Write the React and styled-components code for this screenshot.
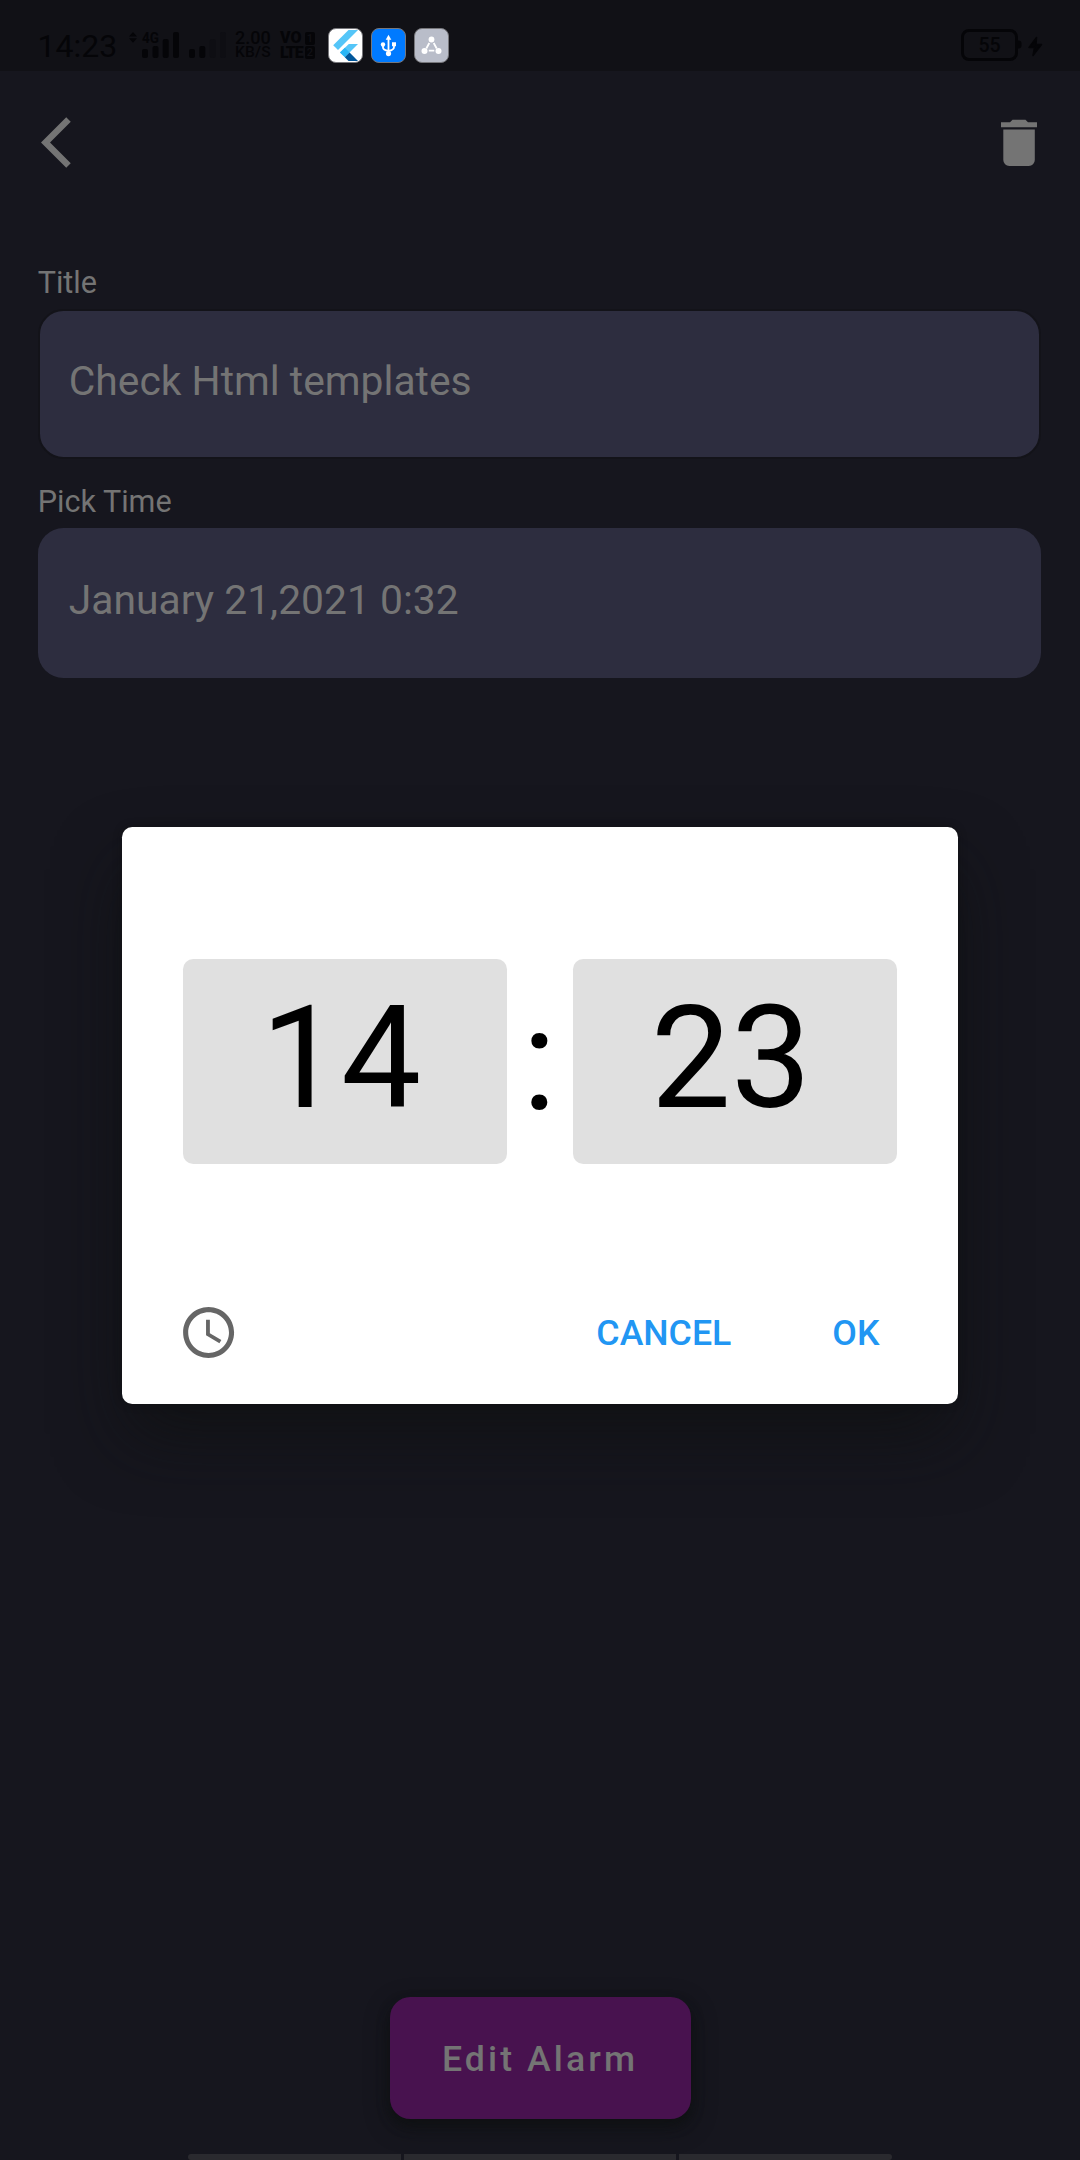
import React from "react";
import styled, { createGlobalStyle } from "styled-components";

const ink = "#050508";

const GlobalStyle = createGlobalStyle`
  * { box-sizing: border-box; }
  html, body { margin: 0; padding: 0; background: #16161e; }
  body { font-family: Roboto, "Liberation Sans", sans-serif; }
  button { font-family: inherit; border: 0; padding: 0; background: none; }
  svg { display: block; }
`;

const Screen = styled.div`
  position: relative;
  display: flex;
  flex-direction: column;
  width: 1080px;
  height: 2160px;
  overflow: hidden;
  background: #16161e;
`;

/* Status bar */
const StatusBar = styled.header`
  display: flex;
  justify-content: space-between;
  height: 71px;
  padding: 28px 36px 0 37.5px;
  background: #111116;
  color: ${ink};
`;
const StatusGroup = styled.div`
  display: flex;
  align-items: flex-start;
`;
const Clock = styled.span`
  width: 91.5px;
  font-size: 32px;
  line-height: 36px;
`;
const Signal = styled.svg`
  width: 100px;
  height: 36px;
  margin-right: 6px;
  fill: ${ink};
  font-weight: 700;
`;
const Stack = styled.div`
  display: flex;
  flex-direction: column;
  padding-top: 3px;
  width: ${(p) => p.$width}px;
`;
const StackLine = styled.span`
  display: flex;
  justify-content: space-between;
  height: ${(p) => p.$height}px;
  width: ${(p) => p.$width}px;
  font-size: ${(p) => p.$size}px;
  font-weight: ${(p) => p.$weight};
  line-height: ${(p) => p.$height}px;
  letter-spacing: ${(p) => p.$spacing || 0}px;
  white-space: nowrap;
`;
const SimBadge = styled.span`
  width: 10px;
  height: 13px;
  margin-top: 1px;
  border-radius: 2px;
  background: ${ink};
  color: #111116;
  font-size: 11px;
  font-weight: 500;
  line-height: 13px;
  letter-spacing: 0;
  text-align: center;
`;
const Notices = styled.div`
  display: flex;
  gap: 8px;
  margin-left: 12px;
`;
const NoticeIcon = styled.svg`
  width: 35px;
  height: 35px;
  border-radius: 8px;
  border: 1px solid #77777b;
  background: ${(p) => p.$color};
`;
const Battery = styled.div`
  width: 57px;
  height: 32px;
  margin-top: 1px;
  border: 3px solid ${ink};
  border-radius: 8px;
  font-size: 19.5px;
  font-weight: 500;
  line-height: 28px;
  text-align: center;
`;
const BatteryTail = styled.svg`
  width: 26px;
  height: 35px;
  fill: ${ink};
`;

/* Page */
const Toolbar = styled.nav`
  display: flex;
  justify-content: space-between;
  height: 193.6px;
  padding: 40.7px 43px 0 40.8px;
`;
const ToolIcon = styled.svg`
  width: ${(p) => p.$width}px;
  height: 61.2px;
  fill: #747474;
`;
const Form = styled.main`
  display: flex;
  flex-direction: column;
  flex: 1;
  padding: 0 39px 0 38.25px;
  color: #747474;
`;
const Label = styled.label`
  height: ${(p) => p.$height}px;
  margin-left: -0.6px;
  font-size: 30.6px;
  line-height: 36px;
`;
const Field = styled.div`
  height: 150px;
  margin-bottom: ${(p) => p.$gap || 0}px;
  padding: ${(p) => p.$top}px 28.5px 0;
  border: ${(p) => (p.$outlined ? "2.5px solid #131319" : "0")};
  border-radius: 25.5px;
  background: #2d2d3f;
  font-size: 40.8px;
  line-height: 48px;
`;
const PickerField = styled(Field)`
  padding-left: 30.5px;
`;
const Footer = styled.footer`
  display: flex;
  flex-direction: column;
  align-items: center;
  height: 163px;
`;
const EditButton = styled.button`
  width: 301px;
  height: 122px;
  margin-bottom: 35px;
  padding-top: 2px;
  border-radius: 20.4px;
  background: #48124f;
  color: #747474;
  font-size: 35.7px;
  font-weight: 500;
  letter-spacing: 3.06px;
  box-shadow: 0 6px 12px rgba(13, 16, 15, 0.7), 0 8px 26px rgba(13, 16, 15, 0.4);
`;
const NavHandle = styled.div`
  display: grid;
  grid-template-columns: 213px 272px 213px;
  gap: 3px;
  width: 704px;
  height: 6px;
  border-radius: 3px;
  overflow: hidden;
`;
const NavSegment = styled.i`
  background: #2a2a2f;
`;

/* Time picker */
const Overlay = styled.div`
  position: absolute;
  inset: 0;
  display: flex;
  justify-content: center;
  align-items: flex-start;
  padding-top: 827.4px;
`;
const Dialog = styled.section`
  display: flex;
  flex-direction: column;
  justify-content: space-between;
  width: 836.4px;
  height: 576.2px;
  padding: 131.8px 61.2px 40.5px;
  border-radius: 10.2px;
  background: #fff;
  box-shadow: 0 36px 70px -6px rgba(14, 16, 15, 0.7), 0 0 8px rgba(14, 16, 15, 0.4);
`;
const TimeRow = styled.div`
  display: grid;
  grid-template-columns: 324px 66px 324px;
  color: #000;
  font-size: 142.8px;
  line-height: 204.4px;
  text-align: center;
`;
const TimeBox = styled.div`
  height: 204.4px;
  padding-right: 8px;
  border-radius: 10.2px;
  background: #e0e0e0;
  line-height: 200px;
`;
const Colon = styled.span`
  margin-left: -1.5px;
  line-height: 204px;
`;
const Actions = styled.div`
  display: flex;
  align-items: center;
  justify-content: space-between;
`;
const ModeIcon = styled.svg`
  width: 61.2px;
  height: 61.2px;
  margin-left: -5px;
  fill: #666;
`;
const Choices = styled.div`
  display: flex;
  gap: 101px;
  padding: 1px 17.5px 0 0;
`;
const TextButton = styled.button`
  color: #2196f3;
  font-size: 35.7px;
  font-weight: 500;
  line-height: 42px;
`;

function SignalIcon() {
  return (
    <Signal viewBox="129 28 100 36">
      <path d="M129 36.500l4-4.500 4 4.500zM129 38.300l4 4.500 4-4.500z" />
      <text x="142" y="43" fontSize="15.500" textLength="17" lengthAdjust="spacingAndGlyphs">4G</text>
      <rect x="142" y="49" width="6" height="9" rx="2" />
      <rect x="152.500" y="46" width="6" height="12" rx="2" />
      <rect x="162.700" y="39" width="6" height="19" rx="2" />
      <rect x="173" y="32" width="6" height="26" rx="2" />
      <rect x="189" y="49" width="6" height="9" rx="2" />
      <rect x="199.300" y="46" width="6" height="12" rx="2" />
      <g fill="#0e0e13">
        <rect x="209.700" y="39" width="6" height="19" rx="2" />
        <rect x="220" y="32" width="6" height="26" rx="2" />
      </g>
    </Signal>
  );
}

function FlutterIcon() {
  return (
    <NoticeIcon $color="#fff" viewBox="0 0 33 33">
      <path fill="#54c5f8" d="M19.500 1H29L9 21l-4.800-4.800z" />
      <path fill="#54c5f8" d="M19.800 15H29L20.500 23.500 16 28 11 23.500z" />
      <path fill="#29b6f6" d="M11 23.500l4.800-4.800 4.800 4.800-4.800 4.800z" />
      <path fill="#01579b" d="M15.800 28.300l4.800-4.800L29 32h-9.500z" />
    </NoticeIcon>
  );
}

function UsbIcon() {
  return (
    <NoticeIcon $color="#007aff" viewBox="0 0 33 33">
      <g fill="none" stroke="#fff" strokeWidth="1.800">
        <path d="M16.500 9v16M11 16v2.500q0 2.500 5.500 3.500M22 15.500V18q0 3-5.500 4" />
      </g>
      <g fill="#fff">
        <path d="M16.500 5.800l2.800 5h-5.600z" />
        <circle cx="11" cy="15.500" r="2.200" />
        <path d="M20 13.300h4v4h-4z" />
        <circle cx="16.500" cy="24.600" r="2.600" />
      </g>
    </NoticeIcon>
  );
}

function ShareIcon() {
  return (
    <NoticeIcon $color="#b9bdc9" viewBox="0 0 33 33">
      <g fill="none" stroke="#fff" strokeWidth="1.800">
        <path d="M14.300 14l-3 5.500M18.700 14l3 5.500M13.800 21.700h5.500" />
      </g>
      <g fill="#fff">
        <circle cx="16.500" cy="10.500" r="2.900" />
        <circle cx="9.500" cy="22" r="3" />
        <circle cx="23.500" cy="22" r="3" />
      </g>
    </NoticeIcon>
  );
}

export default function App() {
  return (
    <>
      <GlobalStyle />
      <Screen>
        <StatusBar>
          <StatusGroup>
            <Clock>14:23</Clock>
            <SignalIcon />
            <Stack $width={45}>
              <StackLine $width={36} $height={14} $size={18} $weight={500}>2.00</StackLine>
              <StackLine $width={36} $height={15} $size={15.5} $weight={500} $spacing={0.2}>KB/S</StackLine>
            </Stack>
            <Stack $width={36}>
              <StackLine $width={35} $height={14} $size={16} $weight={900}>VO<SimBadge>1</SimBadge></StackLine>
              <StackLine $width={35} $height={16} $size={16} $weight={900} $spacing={-1.2}>LTE<SimBadge>2</SimBadge></StackLine>
            </Stack>
            <Notices>
              <FlutterIcon />
              <UsbIcon />
              <ShareIcon />
            </Notices>
          </StatusGroup>
          <StatusGroup>
            <Battery>55</Battery>
            <BatteryTail viewBox="1018 28 26 35">
              <path d="M1017 40.500h1.500a3 3 0 0 1 3 3v2a3 3 0 0 1-3 3H1017z" />
              <path stroke={ink} strokeWidth="1.500" strokeLinejoin="round" d="M1036.500 37.500l-7.500 10h5.500l-1.500 8 8.500-11h-5.500z" />
            </BatteryTail>
          </StatusGroup>
        </StatusBar>

        <Toolbar>
          <ToolIcon $width={30.6} viewBox="0 0 12 24">
            <path d="M11.670 3.870L9.900 2.100 0 12l9.900 9.900 1.770-1.770L3.540 12z" />
          </ToolIcon>
          <ToolIcon $width={36} viewBox="1001 111.700 36 61.200">
            <path d="M1001 122h9l2.500-2.500h13l2.500 2.500h9v5h-36zM1003.300 129.300h31.500v30.500a6 6 0 0 1-6 6h-19.500a6 6 0 0 1-6-6z" />
          </ToolIcon>
        </Toolbar>

        <Form>
          <Label $height={44.2}>Title</Label>
          <Field $outlined $top={46.5} $gap={25.2}>Check Html templates</Field>
          <Label $height={44}>Pick Time</Label>
          <PickerField $top={48}>January 21,2021 0:32</PickerField>
        </Form>

        <Footer>
          <EditButton>Edit Alarm</EditButton>
          <NavHandle>
            <NavSegment />
            <NavSegment />
            <NavSegment />
          </NavHandle>
        </Footer>

        <Overlay>
          <Dialog>
            <TimeRow>
              <TimeBox>14</TimeBox>
              <Colon>:</Colon>
              <TimeBox>23</TimeBox>
            </TimeRow>
            <Actions>
              <ModeIcon viewBox="0 0 24 24">
                <path d="M11.990 2C6.470 2 2 6.480 2 12s4.470 10 9.990 10C17.520 22 22 17.520 22 12S17.520 2 11.990 2zM12 20c-4.420 0-8-3.580-8-8s3.580-8 8-8 8 3.580 8 8-3.580 8-8 8zM12.500 7H11v6l5.250 3.150.75-1.230-4.500-2.670z" />
              </ModeIcon>
              <Choices>
                <TextButton>CANCEL</TextButton>
                <TextButton>OK</TextButton>
              </Choices>
            </Actions>
          </Dialog>
        </Overlay>
      </Screen>
    </>
  );
}
